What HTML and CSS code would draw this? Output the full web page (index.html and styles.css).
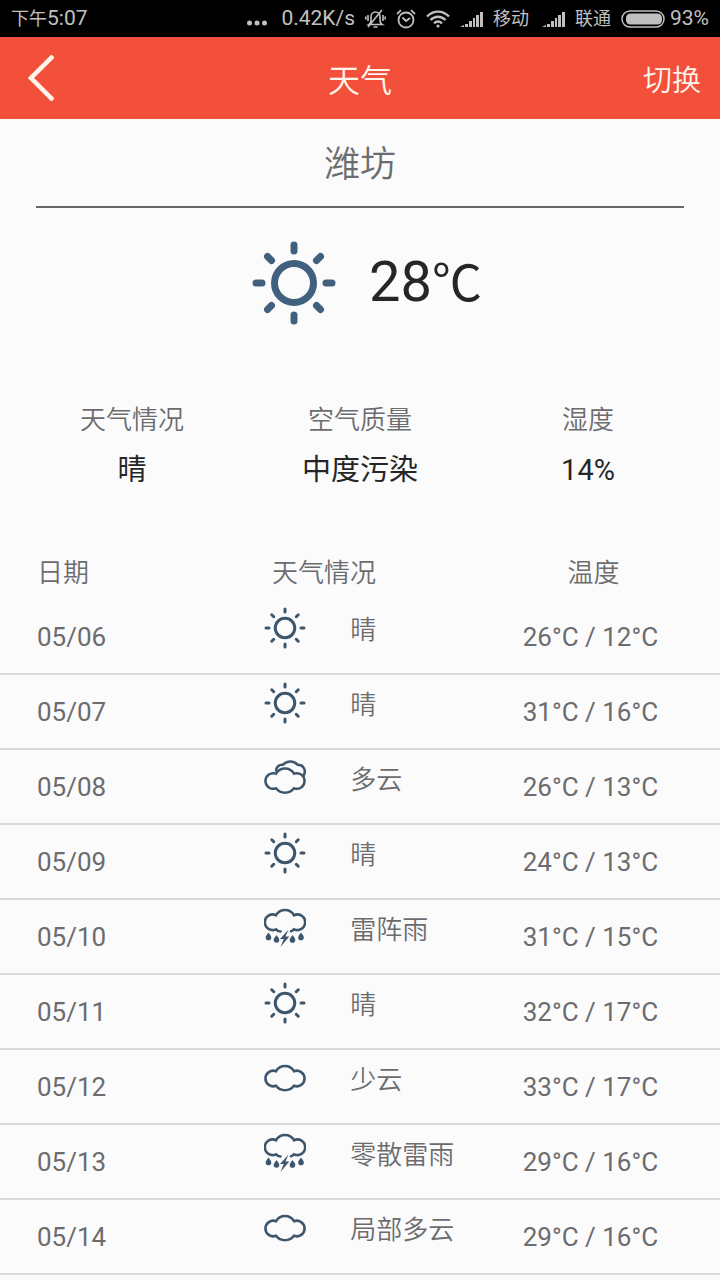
FILE: index.html
```html
<!DOCTYPE html>
<html lang="zh-CN">
<head>
    <meta charset="UTF-8">
    <meta name="viewport" content="width=device-width, initial-scale=1.0">
    <title>天气</title>
    <link rel="stylesheet" href="styles.css">
</head>
<body>

    <!-- 图标 -->
    <svg class="icon-defs" aria-hidden="true">
        <symbol id="sun" viewBox="0 0 84 84">
            <g fill="none" stroke="currentColor" stroke-linecap="round">
                <circle cx="42" cy="42" r="19.500"/>
                <path d="M42 4v6M42 74v6M4 42h6M74 42h6M15.500 15.500l4 4M64.500 64.500l4 4M68.500 15.500l-4 4M19.500 64.500l-4 4"/>
            </g>
        </symbol>
        <symbol id="cloud" viewBox="0 0 42 42">
            <path fill="none" stroke="currentColor" stroke-width="2.600" d="M12 14.200A10.400 10.400 0 0 1 30 14.200A7.800 7.800 0 1 1 30 28.800A11.400 11.400 0 0 1 12 28.800A7.800 7.800 0 1 1 12 14.200z"/>
        </symbol>
        <symbol id="clouds" viewBox="0 0 42 42">
            <g fill="none" stroke="currentColor" stroke-width="2.500">
                <path d="M12 16.700A10.400 10.400 0 0 1 30 16.700A7.800 7.800 0 1 1 30 31.300A11.400 11.400 0 0 1 12 31.300A7.800 7.800 0 1 1 12 16.700z"/>
                <path d="M12 14.500C12 10 15 7.300 19 7.700C23 3.500 30 3.500 33.500 7.800C39.500 7.500 42.800 13.500 39.300 19"/>
            </g>
        </symbol>
        <symbol id="thunder" viewBox="0 0 42 42">
            <path fill="none" stroke="currentColor" stroke-width="2.600" stroke-linecap="round" d="M16.500 24.500C14.500 24.500 13 23.800 12 22.300A7.800 7.800 0 1 1 12 8.200A10.400 10.400 0 0 1 30 8.200A7.800 7.800 0 1 1 30 22.300C29.300 23.300 28.300 24 27 24.300"/>
            <path fill="currentColor" d="M24.500 22.500l-8.500 9.500h3.800L16.500 40l8.800-10.500h-3.800z"/>
            <path fill="currentColor" d="M4.500 25.500c1.500 2.200 2.800 3.500 2.800 4.900a2.800 2.800 0 0 1-5.600 0c0-1.400 1.300-2.700 2.800-4.900zM12.500 28c1.500 2.200 2.800 3.500 2.800 4.900a2.800 2.800 0 0 1-5.600 0c0-1.400 1.300-2.700 2.800-4.900zM28.500 28c1.500 2.200 2.800 3.500 2.800 4.900a2.800 2.800 0 0 1-5.600 0c0-1.400 1.300-2.700 2.800-4.900zM37 25.500c1.500 2.200 2.800 3.500 2.800 4.900a2.800 2.800 0 0 1-5.600 0c0-1.400 1.300-2.700 2.800-4.900z"/>
        </symbol>
        <symbol id="signal" viewBox="0 0 23 18">
            <path fill="currentColor" d="M0 17l4-2v2zM5 14h3v3H5zM9 11h3v6H9zM13 8h2v9h-2zM16 5h3v12h-3zM20 2h3v15h-3z"/>
        </symbol>
    </svg>

    <!-- 状态栏 -->
    <div class="status-bar">
        <span class="clock"><span class="cn">下午</span>5:07</span>
        <div class="status-items">
            <svg class="dots" viewBox="0 0 20 20" fill="currentColor"><circle cx="2.500" cy="14" r="2.500"/><circle cx="10" cy="14" r="2.500"/><circle cx="17.500" cy="14" r="2.500"/></svg>
            <span class="speed">0.42K/s</span>
            <svg width="21" height="20" viewBox="0 0 21 20" fill="none" stroke="currentColor" stroke-width="1.600">
                <path d="M4 15.500h13c-1.800-1-2-2.500-2-5V8c0-3-2-5-4.500-5S6 5 6 8v2.500c0 2.500-.2 4-2 5zM8.500 18h4M17 1L3 18M3 6v6M.8 7.500v3M18 6v6M20.200 7.500v3"/>
            </svg>
            <svg width="20" height="20" viewBox="0 0 20 20" fill="none" stroke="currentColor" stroke-width="1.800">
                <circle cx="10" cy="11" r="7.500"/><path d="M6.500 8.500L10 12l4-3M1 5l4-3.800M19 5l-4-3.800"/>
            </svg>
            <svg width="24" height="20" viewBox="0 0 24 20" fill="none" stroke="currentColor" stroke-width="2.400">
                <path d="M1 7.500c6.500-6.500 15.500-6.500 22 0M4.500 11c4.500-4.300 10.500-4.300 15 0M8 14.300c2.500-2.300 5.500-2.300 8 0"/><circle cx="12" cy="17" r="1.600" fill="currentColor" stroke="none"/>
            </svg>
            <svg width="23" height="18"><use href="#signal"/></svg>
            <span class="cn carrier">移动</span>
            <svg width="23" height="18"><use href="#signal"/></svg>
            <span class="cn">联通</span>
            <span class="battery">
                <svg width="44" height="18" viewBox="0 0 44 18"><rect x="1" y="1" width="42" height="16" rx="8" fill="none" stroke="currentColor" stroke-width="1.500"/><rect x="5" y="3.500" width="36" height="11" rx="4.500" fill="currentColor"/></svg>
                93%
            </span>
        </div>
    </div>

    <!-- 标题栏 -->
    <header class="header">
        <button type="button" class="back" aria-label="返回">
            <svg width="26" height="46" viewBox="0 0 26 46" fill="none" stroke="currentColor" stroke-width="4.500"><path d="M25 1L3 23l22 22"/></svg>
        </button>
        <h1>天气</h1>
        <button type="button" class="switch">切换</button>
    </header>

    <main>
        <h2 class="city">潍坊</h2>

        <!-- 当前天气 -->
        <div class="current">
            <svg class="current-icon"><use href="#sun"/></svg>
            <span class="current-temp">28<span class="unit">℃</span></span>
        </div>

        <dl class="stats">
            <div>
                <dt>天气情况</dt>
                <dd>晴</dd>
            </div>
            <div>
                <dt>空气质量</dt>
                <dd>中度污染</dd>
            </div>
            <div>
                <dt>湿度</dt>
                <dd>14%</dd>
            </div>
        </dl>

        <!-- 天气预报 -->
        <table class="forecast">
            <thead>
                <tr><th class="date">日期</th><th class="weather">天气情况</th><th class="temp">温度</th></tr>
            </thead>
            <tbody>
                <tr>
                    <td class="date">05/06</td>
                    <td><div class="weather-cell"><svg><use href="#sun"/></svg>晴</div></td>
                    <td class="temp">26°C / 12°C</td>
                </tr>
                <tr>
                    <td class="date">05/07</td>
                    <td><div class="weather-cell"><svg><use href="#sun"/></svg>晴</div></td>
                    <td class="temp">31°C / 16°C</td>
                </tr>
                <tr>
                    <td class="date">05/08</td>
                    <td><div class="weather-cell"><svg><use href="#clouds"/></svg>多云</div></td>
                    <td class="temp">26°C / 13°C</td>
                </tr>
                <tr>
                    <td class="date">05/09</td>
                    <td><div class="weather-cell"><svg><use href="#sun"/></svg>晴</div></td>
                    <td class="temp">24°C / 13°C</td>
                </tr>
                <tr>
                    <td class="date">05/10</td>
                    <td><div class="weather-cell"><svg><use href="#thunder"/></svg>雷阵雨</div></td>
                    <td class="temp">31°C / 15°C</td>
                </tr>
                <tr>
                    <td class="date">05/11</td>
                    <td><div class="weather-cell"><svg><use href="#sun"/></svg>晴</div></td>
                    <td class="temp">32°C / 17°C</td>
                </tr>
                <tr>
                    <td class="date">05/12</td>
                    <td><div class="weather-cell"><svg><use href="#cloud"/></svg>少云</div></td>
                    <td class="temp">33°C / 17°C</td>
                </tr>
                <tr>
                    <td class="date">05/13</td>
                    <td><div class="weather-cell"><svg><use href="#thunder"/></svg>零散雷雨</div></td>
                    <td class="temp">29°C / 16°C</td>
                </tr>
                <tr>
                    <td class="date">05/14</td>
                    <td><div class="weather-cell"><svg><use href="#cloud"/></svg>局部多云</div></td>
                    <td class="temp">29°C / 16°C</td>
                </tr>
            </tbody>
        </table>
    </main>

</body>
</html>
```
FILE: styles.css
```css
* {
    box-sizing: border-box;
}

body {
    margin: 0;
    background-color: #fbfbfc;
    color: #6c6c6e;
    font-family: Roboto, "Noto Sans CJK SC", sans-serif;
    font-size: 26px;
    font-weight: 400;
}

svg {
    display: block;
    flex: none;
}

.icon-defs {
    width: 0;
    height: 0;
    position: absolute;
}

/* 状态栏 */
.status-bar {
    display: flex;
    justify-content: space-between;
    align-items: center;
    height: 37px;
    padding: 0 11px;
    background-color: #000;
    color: #c0c0c0;
    font-size: 21px;
    line-height: 37px;
    white-space: nowrap;
}

.status-items {
    display: flex;
    align-items: center;
    gap: 10px;
}

.dots {
    width: 20px;
    height: 20px;
    margin-right: 4px;
}

.cn {
    font-size: 18px;
}

.carrier {
    margin-right: 3px;
}

.battery {
    display: flex;
    align-items: center;
    gap: 5px;
}

/* 标题栏 */
.header {
    display: grid;
    grid-template-columns: 1fr auto 1fr;
    align-items: center;
    height: 82px;
    background-color: #f2503a;
    color: #fff4ea;
}

.header h1 {
    margin: 0;
    font-size: 32px;
    font-weight: 350;
}

.header button {
    border: none;
    background: none;
    color: inherit;
    font-family: inherit;
    font-weight: 350;
    cursor: pointer;
}

.header .back {
    justify-self: start;
    padding: 0 28px;
}

.header .switch {
    justify-self: end;
    padding: 0 19px;
    font-size: 29px;
}

/* 城市 */
.city {
    height: 89px;
    margin: 0 5%;
    padding-top: 2px;
    border-bottom: 2px solid #666;
    font-size: 36px;
    font-weight: 350;
    line-height: 88px;
    text-align: center;
}

/* 当前天气 */
.current {
    display: flex;
    justify-content: center;
    align-items: center;
    gap: 33px;
    height: 150px;
    padding-left: 14px;
    color: #262626;
}

.current-icon {
    width: 84px;
    height: 84px;
    color: #40607d;
    stroke-width: 7px;
}

.current-temp {
    font-size: 56px;
    line-height: 80px;
}

.unit {
    font-size: 50px;
}

.stats {
    display: flex;
    margin: 0;
    padding: 42px 18px 0;
    text-align: center;
}

.stats div {
    flex: 1;
}

.stats dt {
    line-height: 40px;
    font-weight: 350;
}

.stats dd {
    margin: 0;
    color: #262626;
    font-size: 29px;
    line-height: 60px;
}

/* 天气预报 */
.forecast {
    width: 100%;
    margin-top: 48px;
    border-collapse: separate;
    border-spacing: 0;
    table-layout: fixed;
}

.forecast th {
    height: 52px;
    padding: 0 0 8px;
    font-weight: 350;
}

.forecast td {
    height: 75px;
    padding: 0;
    border-bottom: 2px solid #dadadd;
}

.forecast .date {
    width: 26%;
    padding-left: 37px;
    text-align: left;
}

.forecast .weather {
    width: 38%;
}

.forecast .temp {
    width: 36%;
    text-align: center;
}

.forecast th.temp {
    padding-left: 6px;
}

.weather-cell {
    display: flex;
    align-items: center;
    gap: 44px;
    height: 73px;
    padding: 0 0 18px 77px;
    font-weight: 350;
    white-space: nowrap;
}

.weather-cell svg {
    width: 42px;
    height: 42px;
    color: #3d566c;
    stroke-width: 6px;
}
```
